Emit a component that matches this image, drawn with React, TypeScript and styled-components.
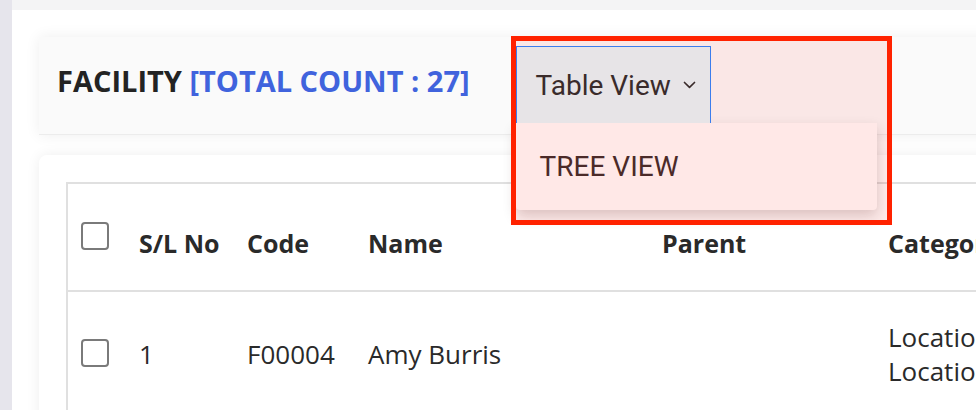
import React from "react";
import styled, { createGlobalStyle } from "styled-components";

const Global = createGlobalStyle`
  html, body { margin: 0; padding: 0; background: #ffffff; }
  body { font-family: "Open Sans", "DejaVu Sans", sans-serif; overflow: hidden; }
  * { box-sizing: border-box; }
`;

const Shell = styled.div`
  display: flex;
  width: 976px;
  height: 410px;
  overflow: hidden;
`;

const Sidebar = styled.div`
  flex: 0 0 12px;
  background: #e6e5ec;
`;

const Main = styled.div`
  flex: 0 0 1100px;
  display: flex;
  flex-direction: column;
`;

const TopStrip = styled.div`
  flex: 0 0 10px;
  background: #f4f4f5;
`;

const Content = styled.div`
  flex: 0 0 auto;
  display: flex;
  flex-direction: column;
  gap: 20px;
  padding: 27px 0 0 27px;
  background: #ffffff;
`;

const HeaderCard = styled.div`
  flex: 0 0 98px;
  display: flex;
  align-items: flex-start;
  padding: 9px 0 0 18px;
  background: #fafafa;
  border-bottom: 1px solid #ececec;
  box-shadow: 0 0 14px rgba(0, 0, 0, 0.07);
`;

const Title = styled.h1`
  margin: 20px 0 0 0;
  font-family: "Open Sans", sans-serif;
  font-size: 29px;
  font-weight: 700;
  line-height: 1;
  color: #232323;
  white-space: nowrap;
`;

const Count = styled.span`
  color: #4063dd;
`;

const SelectWrap = styled.div`
  position: relative;
  margin-left: 46px;
`;

const SelectBox = styled.div`
  position: relative;
  z-index: 5;
  display: flex;
  align-items: center;
  gap: 12px;
  width: 195px;
  height: 77px;
  padding-left: 19px;
  background: #e7e4e7;
  border: 1px solid #3b7ded;
  border-bottom: none;
  font-family: Roboto, sans-serif;
  font-size: 28px;
  color: #3a2b2b;
`;

const Menu = styled.div`
  position: absolute;
  z-index: 3;
  top: 77px;
  left: 0;
  width: 361px;
  height: 87px;
  display: flex;
  align-items: center;
  padding-left: 24px;
  background: #fffbfb;
  border-radius: 0 0 4px 4px;
  box-shadow: 0 6px 14px rgba(60, 20, 20, 0.2);
  font-family: Roboto, sans-serif;
  font-size: 28px;
  color: #3a2b2b;
`;

const Highlight = styled.div`
  position: absolute;
  z-index: 4;
  left: -5px;
  top: -10px;
  width: 381px;
  height: 189px;
  border: 5px solid #ff2200;
  background: rgba(255, 30, 20, 0.085);
  pointer-events: none;
`;

const TableCard = styled.div`
  flex: 0 0 auto;
  width: 1060px;
  height: 400px;
  padding: 27px;
  background: #ffffff;
  border-radius: 8px;
  box-shadow: 0 0 14px rgba(0, 0, 0, 0.07);
`;

const Table = styled.div`
  border-left: 2px solid #e0e0e0;
  border-top: 2px solid #e0e0e0;
`;

const Row = styled.div<{ $head?: boolean }>`
  display: grid;
  grid-template-columns: 58px 108px 121px 294px 226px 1fr;
  align-items: center;
  min-height: ${(p) => (p.$head ? "108px" : "122px")};
  border-bottom: ${(p) => (p.$head ? "2px solid #e0e0e0" : "none")};
`;

const Cell = styled.div<{ $head?: boolean }>`
  padding-left: 13px;
  font-family: "Open Sans", sans-serif;
  font-size: ${(p) => (p.$head ? "25px" : "26px")};
  font-weight: ${(p) => (p.$head ? 700 : 400)};
  color: #2a2a2a;
  line-height: 34px;
  white-space: nowrap;
  ${(p) => (p.$head ? "padding-top: 12px;" : "padding-top: 2px;")}
`;

const Check = styled.span`
  display: block;
  width: 28px;
  height: 28px;
  border: 2px solid #7a7a7a;
  border-radius: 4px;
  background: #fff;
`;

const CheckCell = styled.div<{ $head?: boolean }>`
  padding-left: 13px;
  ${(p) => (p.$head ? "margin-top: -2px;" : "")}
`;

const Chevron = () => (
  <svg width="13" height="8" viewBox="0 0 13 8" fill="none">
    <path d="M1.5 1.5 L6.5 6.3 L11.5 1.5" stroke="#3a2b2b" strokeWidth="1.7" strokeLinecap="round" strokeLinejoin="round" />
  </svg>
);

export default function App() {
  return (
    <>
      <Global />
      <Shell>
        <Sidebar />
        <Main>
          <TopStrip />
          <Content>
            <HeaderCard>
              <Title>
                FACILITY <Count>[TOTAL COUNT : 27]</Count>
              </Title>
              <SelectWrap>
                <SelectBox>
                  Table View <Chevron />
                </SelectBox>
                <Menu>TREE VIEW</Menu>
                <Highlight />
              </SelectWrap>
            </HeaderCard>
            <TableCard>
              <Table>
                <Row $head>
                  <CheckCell $head>
                    <Check />
                  </CheckCell>
                  <Cell $head>S/L No</Cell>
                  <Cell $head>Code</Cell>
                  <Cell $head>Name</Cell>
                  <Cell $head>Parent</Cell>
                  <Cell $head>Category</Cell>
                </Row>
                <Row>
                  <CheckCell>
                    <Check />
                  </CheckCell>
                  <Cell>1</Cell>
                  <Cell>F00004</Cell>
                  <Cell>Amy Burris</Cell>
                  <Cell></Cell>
                  <Cell>
                    Location
                    <br />
                    Location
                  </Cell>
                </Row>
              </Table>
            </TableCard>
          </Content>
        </Main>
      </Shell>
    </>
  );
}
